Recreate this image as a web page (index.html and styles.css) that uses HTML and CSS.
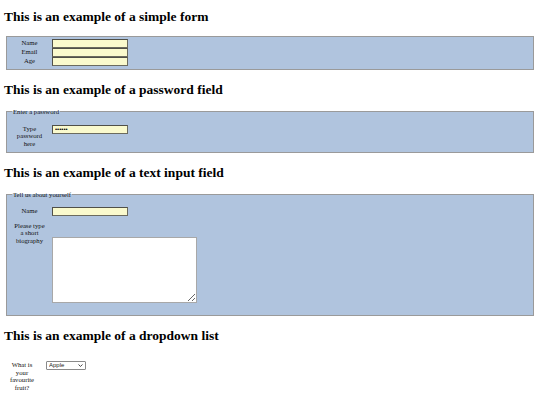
FILE: index.html
```html
<!DOCTYPE html>
<html lang="en">
<head>
<meta charset="utf-8">
<title>Form examples</title>
<link rel="stylesheet" href="styles.css">
</head>
<body>
<h2 class="title">This is an example of a simple form</h2>
<form>
  <fieldset class="panel panel--plain">
    <div class="grid">
      <label class="lbl" for="n1">Name</label><input class="field" id="n1" type="text">
      <label class="lbl" for="e1">Email</label><input class="field" id="e1" type="text">
      <label class="lbl" for="a1">Age</label><input class="field" id="a1" type="text">
    </div>
  </fieldset>
</form>

<h2 class="title">This is an example of a password field</h2>
<form>
  <fieldset class="panel panel--legend panel--pw">
    <legend class="legend">Enter a password</legend>
    <div class="grid">
      <label class="lbl" for="p1">Type password here</label><input class="field" id="p1" type="password" value="secret">
    </div>
  </fieldset>
</form>

<h2 class="title">This is an example of a text input field</h2>
<form>
  <fieldset class="panel panel--legend panel--bio">
    <legend class="legend">Tell us about yourself</legend>
    <div class="grid">
      <label class="lbl" for="n2">Name</label><input class="field" id="n2" type="text">
      <label class="lbl lbl--gap" for="b2">Please type a short biography</label><textarea class="bio" id="b2"></textarea>
    </div>
  </fieldset>
</form>

<h2 class="title">This is an example of a dropdown list</h2>
<form class="plainform">
  <div class="grid grid--drop">
    <label class="lbl" for="f1">What is your favourite fruit?</label>
    <span class="pickwrap">
      <select class="pick" id="f1">
        <option>Apple</option>
        <option>Banana</option>
        <option>Orange</option>
      </select>
      <svg class="chev" width="5" height="3" viewBox="0 0 5 3" aria-hidden="true"><path d="M0.5 0.5 L2.5 2.4 L4.5 0.5" fill="none" stroke="#333" stroke-width="0.9"/></svg>
    </span>
  </div>
</form>
</body>
</html>
```
FILE: styles.css
```css
html, body {
  margin: 0;
  padding: 0;
  background: #ffffff;
  font-family: "Liberation Serif", "Times New Roman", serif;
  color: #000;
}

.title {
  font-size: 13.5px;
  line-height: 15px;
  font-weight: bold;
  margin: 12px 4px 0;
}

.title:first-child {
  margin-top: 9px;
}

form {
  margin: 0;
}

.panel {
  margin: 11px 6px 0;
  border: 1px solid #9a9a9a;
  background: #b0c4de;
  padding: 2px 0 3px 6px;
  min-width: 0;
}

.panel--plain {
  margin-top: 12px;
}

.panel--legend {
  padding-top: 9px;
}

.panel--pw {
  padding-bottom: 4.5px;
}

.panel--bio {
  padding-bottom: 12px;
}

.legend {
  font-size: 6.7px;
  line-height: 7.5px;
  padding: 0 1px;
  margin-left: -1px;
  color: #111;
}

.grid {
  display: grid;
  grid-template-columns: 33px max-content;
  column-gap: 6px;
  align-items: start;
}

.lbl {
  font-size: 6.7px;
  line-height: 7.5px;
  text-align: center;
  color: #111;
}

.lbl--gap {
  margin-top: 5.5px;
}

.field {
  box-sizing: border-box;
  width: 76px;
  height: 9px;
  margin: 0;
  padding: 0 2px;
  border: 1px solid #6b6b5e;
  border-top-color: #505048;
  border-left-color: #505048;
  background: #fafacd;
  font-family: "Liberation Sans", sans-serif;
  font-size: 6px;
  line-height: 7px;
}

.bio {
  box-sizing: border-box;
  width: 145px;
  height: 66px;
  margin: 21px 0 0;
  padding: 1px;
  border: 1px solid #a8a8a8;
  background: #fff;
  font-size: 6.5px;
}

.plainform {
  padding: 18px 0 0 7px;
}

.grid--drop {
  grid-template-columns: 30px max-content;
  column-gap: 9px;
}

.pickwrap {
  position: relative;
  display: block;
  width: 40px;
  height: 9px;
}

.pick {
  appearance: none;
  -webkit-appearance: none;
  display: block;
  box-sizing: border-box;
  width: 40px;
  height: 9px;
  margin: 0;
  padding: 0 0 0 2px;
  border: 1px solid #8a8a8a;
  border-radius: 1px;
  background: #fff;
  font-family: "Liberation Sans", sans-serif;
  font-size: 6px;
  line-height: 7px;
  color: #222;
}

.chev {
  position: absolute;
  right: 3px;
  top: 3px;
  pointer-events: none;
}
```
